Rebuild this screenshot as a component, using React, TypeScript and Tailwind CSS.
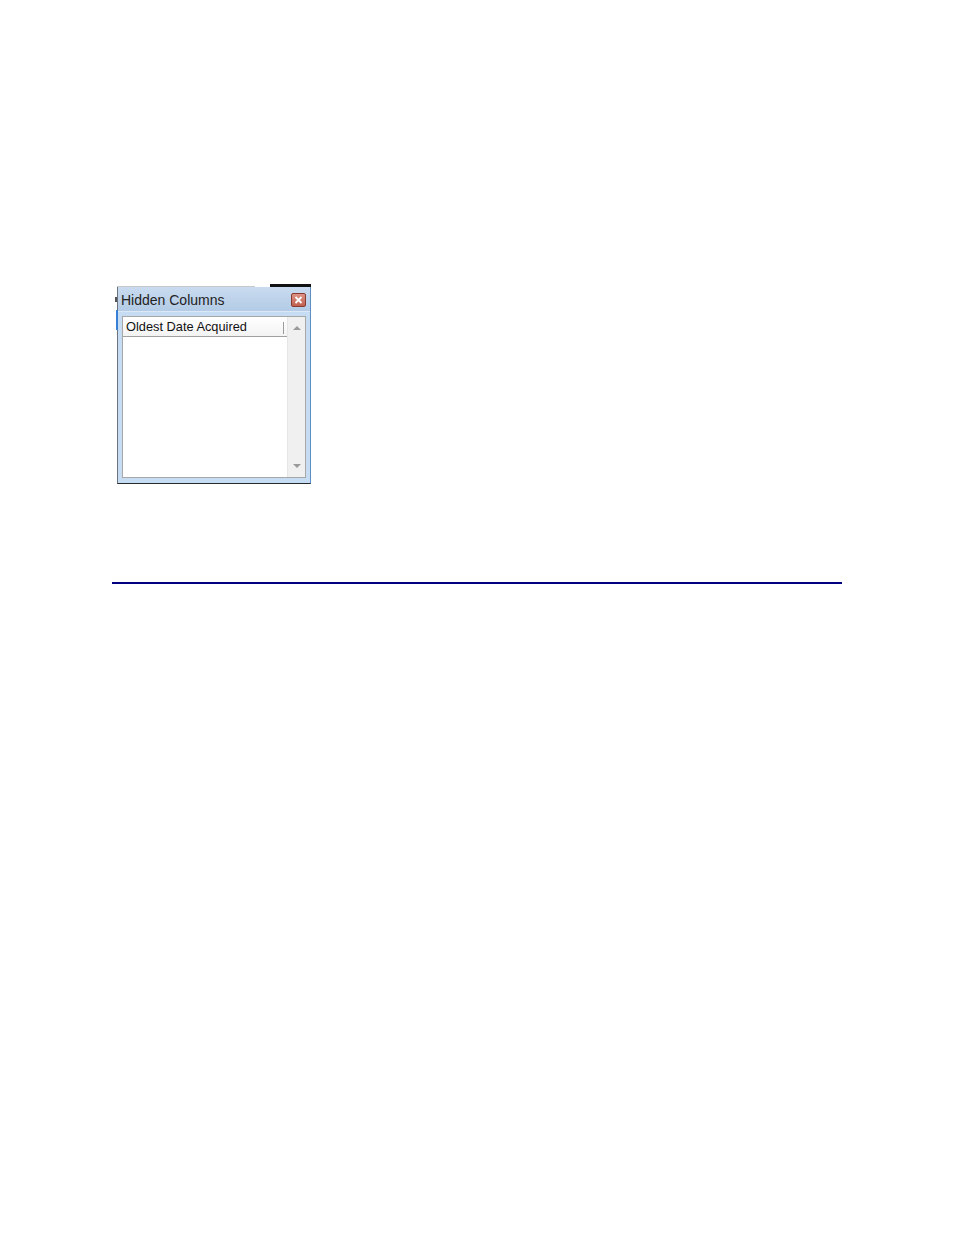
export default function App() {
  return (
    <div className="relative min-h-[1235px] w-[954px] bg-white font-['Liberation_Sans',Arial,sans-serif]">
      <div className="pt-[284px] pl-[117px]">
        <HiddenColumnsDialog />
      </div>
      <div className="mt-[98px] ml-[112px] h-[2px] w-[730px] bg-[#000080]" />
    </div>
  );
}

function HiddenColumnsDialog() {
  return (
    <div className="relative w-[194px]">
      {/* bits of the window behind */}
      <div className="flex h-[3px]">
        <div className="h-[1px] w-[138px] self-end bg-[#c8c8c8]" />
        <div className="w-[15px]" />
        <div className="h-[3px] flex-1 bg-[#111]" />
      </div>
      <div className="absolute left-[-2px] top-[13px] h-[5px] w-[2px] bg-[#555]" />
      <div className="absolute left-[-1px] top-[26px] h-[20px] w-[2px] bg-[#3a7fd6]" />

      <div className="flex h-[197px] flex-col border border-t-0 border-[#6b7280] border-b-[#2a2a2a] border-r-[#5d8fc2] bg-[#c6dcf2]">
        <div className="flex h-[24px] items-center justify-between bg-gradient-to-b from-[#c9dbef] to-[#b3cbe6] pl-[3px] pr-[4px] pt-[2px]">
          <span className="text-[14px] leading-none text-[#222]">Hidden Columns</span>
          <button className="flex h-[14px] w-[15px] items-center justify-center rounded-[2px] border border-[#8a3b2e] bg-gradient-to-b from-[#dc9486] to-[#c0604f]">
            <svg width="9" height="8" viewBox="0 0 9 8">
              <path d="M1.5 1 L7.5 7 M7.5 1 L1.5 7" stroke="#ffffff" strokeWidth="1.8" />
            </svg>
          </button>
        </div>
        <div className="flex flex-1 flex-col border-t border-[#dce8f5] px-[4px] pt-[4px] pb-[5px]">
          <div className="flex flex-1 border border-[#a7a7a7] bg-white">
            <div className="flex flex-1 flex-col">
              <div className="flex h-[20px] items-center justify-between border-b border-[#a0a0a0] bg-gradient-to-b from-white to-[#f3f3f3] pl-[3px] pr-[3px] pt-[2px]">
                <span className="text-[12.8px] leading-none text-[#111]">Oldest Date Acquired</span>
                <div className="h-[12px] w-[1px] bg-[#9a9a9a]" />
              </div>
              <div className="flex-1" />
            </div>
            <div className="flex w-[18px] flex-col items-center justify-between border-l border-[#e6e6e6] bg-[#f0f0f0] py-[8px]">
              <svg width="8" height="5" viewBox="0 0 8 5">
                <path d="M0 5 L4 1 L8 5 Z" fill="#9a9a9a" />
              </svg>
              <svg width="8" height="5" viewBox="0 0 8 5">
                <path d="M0 0 L4 4 L8 0 Z" fill="#9a9a9a" />
              </svg>
            </div>
          </div>
        </div>
      </div>
    </div>
  );
}
